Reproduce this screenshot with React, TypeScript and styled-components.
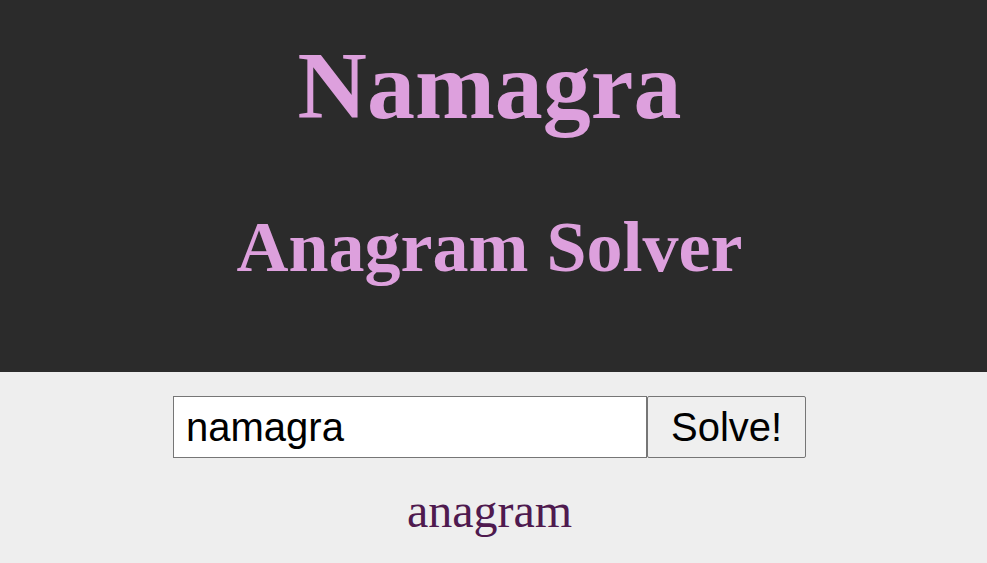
import React from "react";
import styled, { createGlobalStyle } from "styled-components";

const Global = createGlobalStyle`
  html, body { margin: 0; padding: 0; background: #eeeeee; }
  body { font-family: "Liberation Serif", "Times New Roman", serif; }
`;

const Page = styled.div`
  display: flex;
  flex-direction: column;
  min-height: 563px;
  background: #eeeeee;
`;

const Header = styled.header`
  background: #2b2b2b;
  display: flex;
  flex-direction: column;
  align-items: center;
  padding: 38px 8px 89px 0;
  gap: 77px;
`;

const Title = styled.h1<{ $size: number }>`
  margin: 0;
  color: #dda0dd;
  font-family: "Liberation Serif", "Times New Roman", serif;
  font-weight: bold;
  font-size: ${(p) => p.$size}px;
  line-height: ${(p) => p.$size}px;
`;

const Main = styled.main`
  display: flex;
  flex-direction: column;
  align-items: center;
  padding: 24px 8px 0 0;
  gap: 29px;
`;

const Form = styled.form`
  display: flex;
  height: 62px;
`;

const Input = styled.input`
  box-sizing: border-box;
  width: 474px;
  height: 62px;
  margin: 0;
  padding: 0 12px;
  border: 1px solid #767676;
  background: #ffffff;
  color: #000000;
  font-family: "Liberation Sans", Arial, sans-serif;
  font-size: 40px;
  outline: none;
`;

const Button = styled.button`
  box-sizing: border-box;
  width: 159px;
  height: 62px;
  margin: 0;
  padding: 0 23px;
  border: 1px solid #767676;
  border-radius: 2px;
  background: #efefef;
  color: #000000;
  font-family: "Liberation Sans", Arial, sans-serif;
  font-size: 40px;
`;

const Result = styled.div`
  color: #4f1a4f;
  font-family: "Liberation Serif", "Times New Roman", serif;
  font-size: 48px;
  line-height: 48px;
`;

export default function App() {
  return (
    <>
      <Global />
      <Page>
        <Header>
          <Title $size={96}>Namagra</Title>
          <Title as="h2" $size={72}>Anagram Solver</Title>
        </Header>
        <Main>
          <Form onSubmit={(e) => e.preventDefault()}>
            <Input type="text" defaultValue="namagra" />
            <Button type="submit">Solve!</Button>
          </Form>
          <Result>anagram</Result>
        </Main>
      </Page>
    </>
  );
}
